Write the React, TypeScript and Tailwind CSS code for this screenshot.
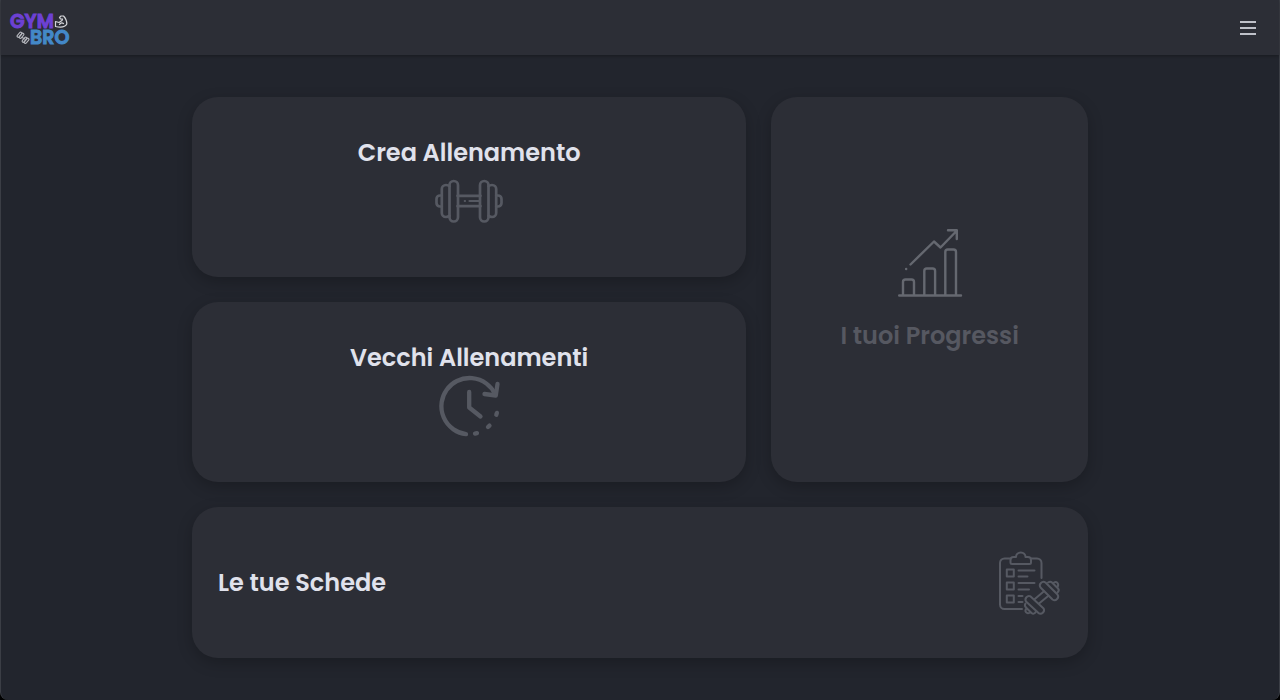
import type { ReactNode } from "react";

const stroke = {
  fill: "none",
  stroke: "currentColor",
  strokeLinecap: "round" as const,
  strokeLinejoin: "round" as const,
};

function Logo() {
  return (
    <span className="flex flex-col pt-[3px] text-[19px] leading-4 font-semibold">
      <span className="flex items-center text-[#6d41d3]">
        <span className="[-webkit-text-stroke:1px_#6d41d3]">GYM</span>
        <svg className="h-4 w-3.5 text-[#d5d6da]" viewBox="0 0 14 16" aria-hidden="true" {...stroke} strokeWidth="1.200">
          <path d="M1.500 12.500V7.500L5 8.500L8 6.500L8.500 5L6.500 5L5.500 3.500L7 2L9.500 2C11.500 4 12.800 7 12.800 10C11 13.500 6 13.500 1.500 12.500ZM5.500 10.500C6 9 8 8.500 9.500 9.500" />
        </svg>
      </span>
      <span className="flex items-center pl-1.5 text-[#4388c8]">
        <svg className="h-4 w-3.5 text-[#b5b7bd]" viewBox="0 0 14 16" aria-hidden="true" {...stroke} strokeWidth="1.100">
          <path d="M6 7.500L9 9" />
          <rect x="0.500" y="3.500" width="6" height="2.500" rx="1.200" transform="rotate(-50 3.500 4.700)" />
          <rect x="2.500" y="4.500" width="6" height="2.500" rx="1.200" transform="rotate(-50 5.500 5.700)" />
          <rect x="5.500" y="8.500" width="6" height="2.500" rx="1.200" transform="rotate(-50 8.500 9.700)" />
          <rect x="7.500" y="9.500" width="6" height="2.500" rx="1.200" transform="rotate(-50 10.500 10.700)" />
        </svg>
        <span className="[-webkit-text-stroke:1px_#4388c8]">BRO</span>
      </span>
    </span>
  );
}

function DumbbellIcon() {
  return (
    <svg className="size-[68px]" viewBox="0 0 68 68" aria-hidden="true" {...stroke} strokeWidth="2.700">
      <rect x="14.500" y="14" width="8.500" height="40.500" rx="4.200" />
      <rect x="45" y="14" width="8.500" height="40.500" rx="4.200" />
      <path d="M14.500 19.200C13.500 18.200 12.500 18 11 18C8.500 18 6.800 19.800 6.800 22V46C6.800 48.200 8.500 50 11 50C12.500 50 13.500 49.800 14.500 48.800" />
      <path d="M53.500 19.200C54.500 18.200 55.500 18 57 18C59.500 18 61.200 19.800 61.200 22V46C61.200 48.200 59.500 50 57 50C55.500 50 54.500 49.800 53.500 48.800" />
      <path d="M6.800 28.500H5C3 28.500 1.500 30 1.500 32V36C1.500 38 3 39.500 5 39.500H6.800M61.200 28.500H63C65 28.500 66.500 30 66.500 32V36C66.500 38 65 39.500 63 39.500H61.200" />
      <path d="M22.500 28.800H45.500M22.500 39.200H45.500" />
      <path d="M34.500 34H44.500M29.800 34H30" strokeWidth="2.200" />
    </svg>
  );
}

function HistoryIcon() {
  return (
    <svg className="size-[68px]" viewBox="0 0 68 68" aria-hidden="true" {...stroke} strokeWidth="4.300">
      <path d="M31 62.200A28.200 28.200 0 1 1 60 22" />
      <path d="M62.500 12L60.800 23.500L49.500 22M34.200 20V35.500L45.500 44.500" />
      <path d="M40 61.600L42 61.100M53 55L54.500 53.600M61.300 42.700L61.900 40.900" />
    </svg>
  );
}

function ProgressIcon() {
  return (
    <svg className="size-[68px]" viewBox="0 0 68 68" aria-hidden="true" {...stroke} strokeWidth="2.400">
      <path d="M3.200 66.500H65M7 66.500V53C7 51.500 8 50.500 9.500 50.500H15.500C17 50.500 18 51.500 18 53V66.500M28.300 66.500V42C28.300 40.500 29.300 39.500 30.800 39.500H36.600C38.100 39.500 39.100 40.500 39.100 42V66.500M49.300 66.500V23C49.300 21.500 50.300 20.500 51.800 20.500H57.500C59 20.500 60 21.500 60 23V66.500" />
      <path d="M14.500 35.500L38 12.500L44.500 18.500L60.500 2M52 1.300H60.800V10M10.100 40H10.200" />
    </svg>
  );
}

function PlanIcon() {
  return (
    <svg className="size-[68px]" viewBox="0 0 68 68" aria-hidden="true" {...stroke} strokeWidth="2">
      <path d="M28 60H10.500C8 60 6 58 6 55.500V14C6 11.500 8 9.500 10.500 9.500H16.500M37 9.500H43C45.500 9.500 47.500 11.500 47.500 14V29" />
      <path d="M18 15H35.500C36.500 15 37 14.500 37 13.500V11C37 9 35.500 8 34 8H31.500C31.500 5.500 29.500 3.500 26.800 3.500S22 5.500 22 8H19.500C18 8 16.500 9 16.500 11V13.500C16.500 14.500 17 15 18 15Z" />
      <path d="M12.800 20.500H19.800V27.500H12.800ZM12.800 33.500H19.800V40.500H12.800ZM12.800 46.500H19.800V53.500H12.800Z" />
      <path d="M24.500 21.500H40.500M24.500 27.500H33.500M24.500 34H40.500M24.500 40.500H35M24.500 47H28.500M24.500 53H28.500" />
      <path d="M36.600 47.400L49.600 59.400A3.600 3.600 0 0 1 44.500 64.100L32 52.500A3.600 3.600 0 0 1 36.600 47.400Z" />
      <path d="M51.500 33.500A3.600 3.600 0 0 0 46.500 38.500L58.500 50.500A3.600 3.600 0 0 0 63.500 45.500Z" />
      <path d="M40.500 50.300L50 42.300M45 54.500L54.500 46.700" />
      <path d="M31.500 54.500C30.500 56 31 57.500 32 58.500L37.500 64C39 65.200 40.500 65 42 62.500M32 60C30.500 62.500 32.500 65.500 36 63.500" />
      <path d="M54 33.500C55.500 32.500 57 32.500 58 33.500L64 39.500C65 40.500 65 42 63.500 43.500M60 33.500C62.500 32 65.500 34.500 63.500 38" />
    </svg>
  );
}

function Card({ className, children }: { className: string; children: ReactNode }) {
  return (
    <a
      href="#"
      className={`flex items-center rounded-[26px] bg-[#2c2e36] text-2xl leading-7 font-semibold shadow-[0_5px_15px_rgba(0,0,0,0.22)] ${className}`}
    >
      {children}
    </a>
  );
}

export default function App() {
  return (
    <div className="min-h-screen bg-black">
      <div className="min-h-screen rounded-b-lg border-x border-[#3b3e45] bg-[#22252d] font-[Poppins,Inter,sans-serif] text-[#e0e2ec]">
        <header className="flex h-[55px] items-center justify-between bg-[#2c2e36] pt-px pr-[21px] pl-[9px] shadow-[0_1px_3px_rgba(0,0,0,0.3)]">
          <a href="#"><Logo /></a>
          <button type="button" aria-label="Menu" className="flex size-5 items-center justify-center text-[#bfc1c9]">
            <svg className="size-5" viewBox="0 0 20 20" fill="none" stroke="currentColor" strokeWidth="1.800">
              <path d="M2 4H18M2 10H18M2 16H18" />
            </svg>
          </button>
        </header>
        <main className="mx-auto grid w-[70vw] grid-cols-[7fr_4fr] gap-[25px] pt-[42px] pb-[42px]">
          <Card className="min-h-[180px] flex-col justify-center">
            <h2>Crea Allenamento</h2>
            <span className="text-[#565962]"><DumbbellIcon /></span>
          </Card>
          <Card className="row-span-2 flex-col justify-center gap-[25px]">
            <span className="text-[#656870]"><ProgressIcon /></span>
            <h2 className="text-[#565861]">I tuoi Progressi</h2>
          </Card>
          <Card className="min-h-[180px] flex-col justify-center">
            <h2>Vecchi Allenamenti</h2>
            <span className="text-[#565962]"><HistoryIcon /></span>
          </Card>
          <Card className="col-span-2 min-h-[151px] justify-between px-[26px]">
            <h2>Le tue Schede</h2>
            <span className="text-[#565962]"><PlanIcon /></span>
          </Card>
        </main>
      </div>
    </div>
  );
}
